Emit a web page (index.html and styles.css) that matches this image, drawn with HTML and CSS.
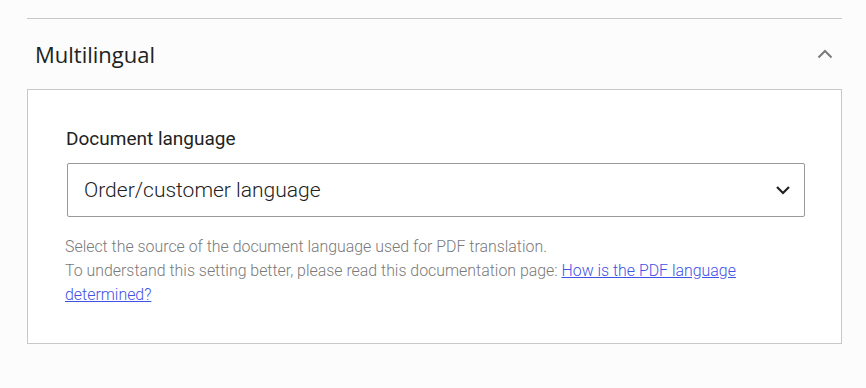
FILE: index.html
```html
<!DOCTYPE html>
<html lang="en">
<head>
    <meta charset="UTF-8">
    <meta name="viewport" content="width=device-width, initial-scale=1.0">
    <title>Multilingual</title>
    <link rel="stylesheet" href="styles.css">
</head>
<body>
    <section class="settings">
        <div class="section-header">
            <h2>Multilingual</h2>
            <svg class="toggle" width="16" height="10" viewBox="0 0 16 10">
                <path d="M1.5 8.5 L8 2 L14.5 8.5" fill="none" stroke="#7a7a7a" stroke-width="2"/>
            </svg>
        </div>
        <div class="panel">
            <label class="field-label" for="doc-lang">Document language</label>
            <div class="select">
                <span id="doc-lang">Order/customer language</span>
                <svg width="14" height="10" viewBox="0 0 14 10">
                    <path d="M1 2 L7 8 L13 2" fill="none" stroke="#222" stroke-width="2.2"/>
                </svg>
            </div>
            <p class="help">
                Select the source of the document language used for PDF translation.<br>
                To understand this setting better, please read this documentation page: <a href="#">How is the PDF language determined?</a>
            </p>
        </div>
    </section>
</body>
</html>
```

FILE: styles.css
```css
body {
    margin: 0;
    background: #fcfcfc;
    font-family: Roboto, sans-serif;
    color: #222;
}
.settings {
    width: 815px;
    margin: 18px 0 0 27px;
}
.section-header {
    display: flex;
    align-items: center;
    justify-content: space-between;
    height: 70px;
    border-top: 1px solid #c8c8c8;
    padding: 0 8px 0 8px;
}
.section-header h2 {
    font-family: 'Open Sans', sans-serif;
    font-weight: 400;
    font-size: 22px;
    margin: 0;
    color: #222;
}
.toggle {
    margin-right: 1px;
}
.panel {
    background: #fff;
    border: 1px solid #c8c8c8;
    padding: 37px 36px 36px 39px;
}
.field-label {
    display: block;
    font-size: 19px;
    line-height: 24px;
    margin-left: -1px;
    margin-bottom: 12px;
}
.select {
    display: flex;
    align-items: center;
    justify-content: space-between;
    height: 52px;
    border: 1px solid #999;
    border-radius: 2px;
    padding: 0 14px 0 16px;
    font-size: 21px;
    font-weight: 300;
    color: #222;
}
.help {
    margin: 18px 0 0 -2px;
    font-size: 15.9px;
    line-height: 24px;
    font-weight: 300;
    color: #7a7a7a;
}
.help a {
    color: #3f51e6;
}
```
